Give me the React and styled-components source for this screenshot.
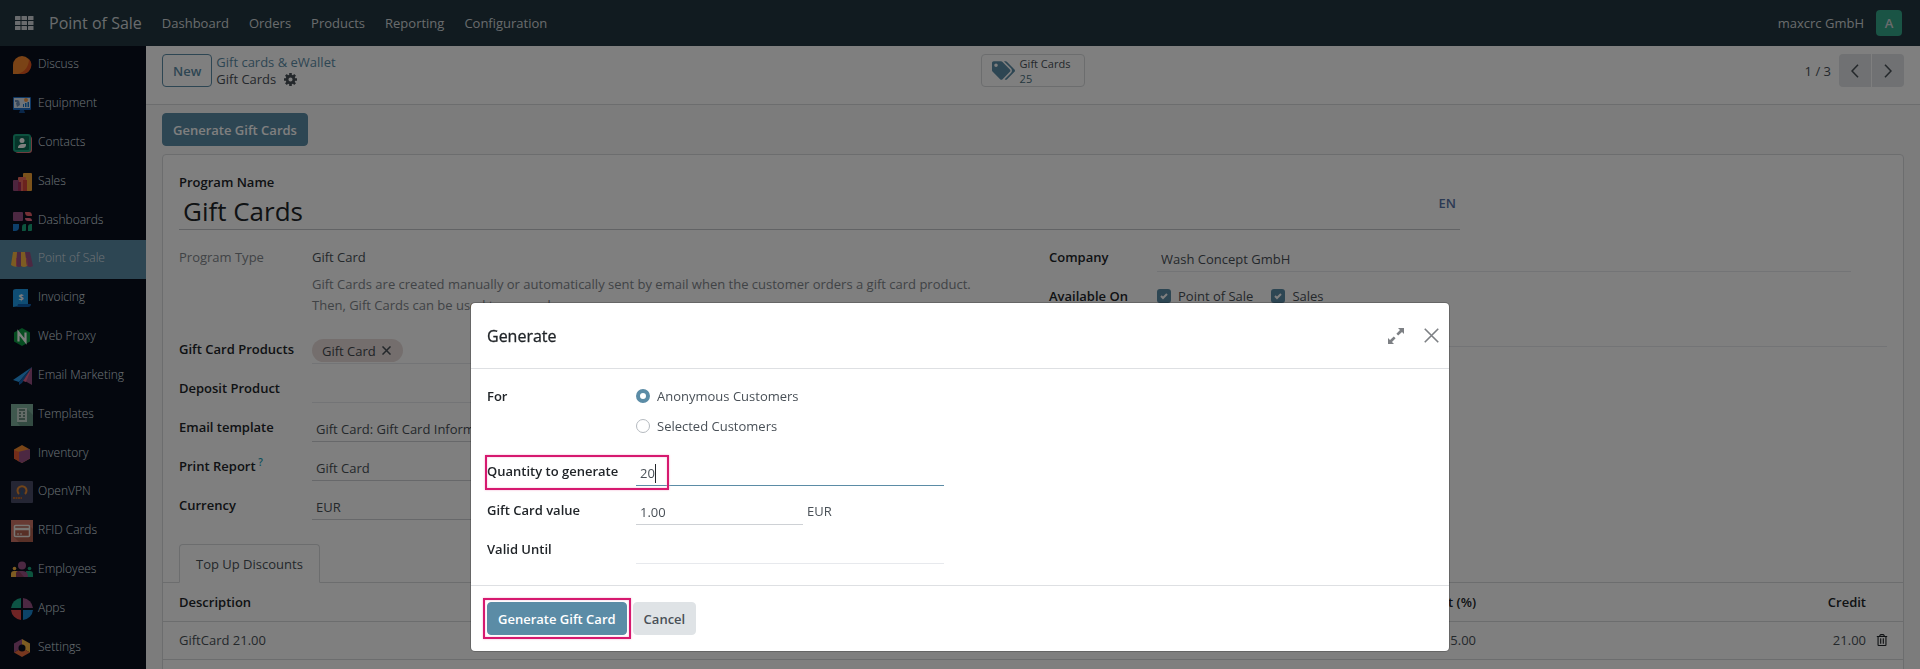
import React, { useState } from "react";
import styled, { createGlobalStyle, css } from "styled-components";
import { FaTags, FaRegTrashAlt } from "react-icons/fa";

const color = {
  primary: "#5b8ca6",
  text: "#495057",
  heading: "#212529",
  muted: "#81868c",
  line: "#d8dadd",
  soft: "#e7e9ed",
  marker: "#d6196f",
};

const GlobalStyle = createGlobalStyle`
  *, *::before, *::after { box-sizing: border-box; }
  body {
    margin: 0;
    overflow: hidden;
    color: ${color.text};
    background: #f9f9f9;
    font: 400 14px/22px "Open Sans", "Noto Sans", sans-serif;
  }
  button, input { font: inherit; color: inherit; }
  a { color: inherit; text-decoration: none; }
  svg { display: block; flex: none; }
`;

const Page = styled.div`
  display: flex;
  flex-direction: column;
  height: 100vh;
  overflow: hidden;
`;

/* ---------- top bar ---------- */
const Navbar = styled.header`
  display: flex;
  align-items: center;
  flex: none;
  height: 46px;
  padding: 0 18px 0 15px;
  background: #223740;
  color: #d3d7da;
`;
const Brand = styled.a`
  margin: 0 20px 0 15px;
  font-size: 16px;
`;
const Menu = styled.nav`
  display: flex;
  gap: 20px;
  flex: 1;
  font-size: 13px;
  font-weight: 500;
`;
const User = styled.button`
  display: flex;
  align-items: center;
  gap: 12px;
  padding: 0;
  border: 0;
  background: none;
  font-size: 13px;
  font-weight: 500;
`;
const Avatar = styled.span`
  width: 26px;
  border-radius: 4px;
  background: #34a88a;
  line-height: 26px;
  font-weight: 600;
`;

/* ---------- side bar ---------- */
const Body = styled.div`
  display: flex;
  flex: 1;
  min-height: 0;
`;
const Sidebar = styled.nav`
  display: flex;
  flex-direction: column;
  flex: none;
  width: 146px;
  padding-bottom: 2px;
  background: #080e1d;
`;
const AppLink = styled.a`
  display: flex;
  align-items: center;
  flex: 1 0 0;
  gap: 5px;
  padding-left: 11px;
  background: ${(p) => (p.$active ? color.primary : "none")};
  color: #dfe3ea;
  font-size: 12px;
  font-weight: 300;
  line-height: 16px;
  white-space: nowrap;
  span { padding-bottom: 2px; }
`;

/* ---------- main column ---------- */
const Main = styled.main`
  flex: 1;
  min-width: 0;
  overflow: hidden;
  display: flex;
  flex-direction: column;
`;
const ControlPanel = styled.div`
  display: grid;
  grid-template-columns: 1fr auto 1fr;
  align-items: start;
  flex: none;
  height: 59px;
  padding: 8px 16px;
  border-bottom: 1px solid ${color.line};
  background: #fff;
`;
const PanelStart = styled.div`
  display: flex;
  gap: 4px;
`;
const PanelEnd = styled.div`
  display: flex;
  align-items: center;
  justify-content: flex-end;
  gap: 8px;
  font-size: 13px;
`;
const Crumbs = styled.div`
  font-size: 13px;
  line-height: 17px;
  a { color: ${color.primary}; font-weight: 500; }
`;
const Current = styled.div`
  display: flex;
  align-items: center;
  gap: 8px;
`;
const IconButton = styled.button`
  display: flex;
  align-items: center;
  justify-content: center;
  padding: 0;
  border: 0;
  background: none;
  color: ${(p) => p.$tone || color.text};
`;
const Button = styled.button`
  height: 33px;
  padding: 0 10px;
  border: 1px solid ${color.primary};
  border-radius: 4px;
  font-size: 13px;
  font-weight: 600;
  line-height: 22px;
  white-space: nowrap;
  ${(p) =>
    ({
      primary: css`background: ${color.primary}; color: #fff;`,
      outline: css`background: #fff; color: ${color.primary};`,
      secondary: css`background: #dfe3e6; border-color: #dfe3e6; color: ${color.text};`,
    })[p.$kind]}
`;
const StatButton = styled.button`
  display: flex;
  align-items: center;
  gap: 5px;
  height: 33px;
  padding: 0 14px 0 10px;
  border: 1px solid ${color.line};
  border-radius: 4px;
  background: #fff;
  font-size: 11px;
  line-height: 15px;
  text-align: left;
  svg { color: ${color.primary}; }
  b { display: block; color: #48707f; font-weight: 500; }
`;
const Pager = styled.div`
  display: flex;
  gap: 1px;
`;
const PagerButton = styled(IconButton)`
  width: 32px;
  height: 33px;
  background: #e0e3e6;
  border-radius: ${(p) => (p.$next ? "0 4px 4px 0" : "4px 0 0 4px")};
`;

/* ---------- form sheet ---------- */
const Content = styled.div`
  display: flex;
  flex-direction: column;
  align-items: stretch;
  flex: 1;
  gap: 8px;
  padding: 8px 16px 0;
`;
const Sheet = styled.section`
  flex: 1 0 auto;
  padding: 16px 0 32px;
  border: 1px solid ${color.line};
  border-radius: 4px 4px 0 0;
  background: #fff;
`;
const SheetInner = styled.div`
  padding: 0 16px;
`;
const Label = styled.label`
  color: ${(p) => (p.$muted ? color.muted : color.heading)};
  font-size: 13px;
  font-weight: ${(p) => (p.$muted ? 500 : 600)};
  sup { color: #17a2b8; font-size: 10px; line-height: 10px; }
`;
const TitleBlock = styled.div`
  display: flex;
  flex-direction: column;
  width: 75%;
  margin-bottom: 16px;
`;
const TitleField = styled.div`
  display: flex;
  align-items: flex-start;
  height: 37px;
  padding: 0 4px;
  border-bottom: 1px solid #c4c7cb;
`;
const TitleInput = styled.input`
  flex: 1;
  min-width: 0;
  height: 36px;
  padding: 0;
  border: 0;
  outline: 0;
  background: none;
  color: ${color.heading};
  font-size: 26px;
`;
const LangButton = styled.button`
  padding: 0;
  border: 0;
  background: none;
  color: #5875a8;
  font-size: 13px;
  font-weight: 600;
  line-height: 20px;
`;
const Groups = styled.div`
  display: grid;
  grid-template-columns: 1fr 1fr;
  gap: 32px;
  margin-bottom: 11px;
`;
const Row = styled.div`
  position: relative;
  display: grid;
  grid-template-columns: ${(p) => p.$label || 133}px minmax(0, 1fr);
  align-items: start;
  padding-bottom: 13px;
  padding-right: ${(p) => p.$end || 0}px;
`;
const Field = styled.div`
  display: flex;
  align-items: center;
  height: 26px;
  padding: 1px 4px 0;
  border-bottom: 1px solid ${(p) => (p.$focus ? color.primary : p.$strong ? "#ced1d5" : color.soft)};
  font-size: 13px;
`;
const FieldInput = styled.input`
  width: ${(p) => p.$width || "100%"};
  height: 22px;
  padding: 0;
  border: 0;
  outline: 0;
  background: none;
  font-size: 13px;
`;
const Caret = styled.span`
  width: 1px;
  height: 19px;
  background: ${color.heading};
`;
const TypeValue = styled.div`
  padding-bottom: 9px;
  font-size: 13px;
  p { margin: 6px 0 0; color: ${color.muted}; line-height: 21px; }
`;
const TagField = styled(Field)`
  padding: 0;
`;
const Tag = styled.span`
  display: flex;
  align-items: center;
  gap: 6px;
  height: 23px;
  padding: 0 12px 0 10px;
  border-radius: 12px;
  background: #e9dddb;
  color: #43484e;
  font-weight: 500;
`;
const Checks = styled.div`
  display: flex;
  gap: 18px;
  height: 23px;
`;
const Choice = styled.label`
  display: flex;
  align-items: center;
  gap: 7px;
  height: 22px;
  font-size: 13px;
`;
const Check = styled.input`
  appearance: none;
  width: 14px;
  height: 14px;
  margin: 0;
  border-radius: 3px;
  background: ${color.primary}
    url("data:image/svg+xml,%3Csvg xmlns='http://www.w3.org/2000/svg' viewBox='0 0 14 14'%3E%3Cpath fill='none' stroke='white' stroke-width='2' d='M4 7l2 2 4-4'/%3E%3C/svg%3E");
`;
const TabBar = styled.div`
  display: flex;
  height: 39px;
  padding: 0 16px;
  border-bottom: 1px solid ${color.line};
`;
const Tab = styled.button`
  height: 39px;
  padding: 0 16px;
  border: 1px solid ${color.line};
  border-bottom-color: #fff;
  border-radius: 4px 4px 0 0;
  background: #fff;
  font-size: 13px;
`;
const Table = styled.table`
  width: 100%;
  border-collapse: collapse;
  table-layout: fixed;
  font-size: 13px;
  tr { height: 38px; border-bottom: 1px solid ${color.line}; }
  th { color: ${color.heading}; font-weight: 600; }
  th, td { padding: 0; text-align: right; }
  th:first-child, td:first-child { padding-left: 16px; text-align: left; }
  td:last-child { padding-left: 10px; }
`;
const Col = styled.col`
  width: ${(p) => p.$width};
`;

/* ---------- dialog ---------- */
const Backdrop = styled.div`
  position: fixed;
  inset: 0;
  display: flex;
  align-items: flex-start;
  justify-content: center;
  padding-top: 303px;
  background: rgba(0, 0, 0, 0.5);
`;
const Dialog = styled.section`
  width: 978px;
  max-width: calc(100% - 32px);
  border-radius: 4px;
  background: #fff;
  box-shadow: 0 0 0 1px rgba(0, 0, 0, 0.2);
`;
const DialogHeader = styled.header`
  display: flex;
  align-items: center;
  gap: 20px;
  height: 66px;
  padding: 0 10px 0 16px;
  border-bottom: 1px solid #dee0e3;
  h2 { flex: 1; margin: 0; color: ${color.heading}; font-size: 16px; font-weight: 500; -webkit-text-stroke: 0.3px; }
`;
const DialogBody = styled.div`
  padding: 16px 16px 8px;
  > div { max-width: 457px; }
`;
const Radios = styled.div`
  display: flex;
  flex-direction: column;
  gap: 8px;
  padding-bottom: 10px;
`;
const Radio = styled.input`
  appearance: none;
  width: 14px;
  height: 14px;
  margin: 0;
  border: 1px solid #b5babf;
  border-radius: 50%;
  background: #fff;
  &:checked { border: 4px solid ${color.primary}; }
`;
const ValueLine = styled.div`
  display: grid;
  grid-template-columns: 167px auto;
  gap: 4px;
  font-size: 13px;
  > span { padding-top: 1px; }
`;
const DialogFooter = styled.footer`
  display: flex;
  gap: 6px;
  padding: 16px;
  border-top: 1px solid #dee0e3;
`;
const Marker = styled.span`
  position: absolute;
  inset: ${(p) => p.$inset};
  width: ${(p) => p.$width || "auto"};
  border: 2px solid ${color.marker};
  box-shadow: 0 0 2px #f3b0d0, inset 0 0 2px #f3b0d0;
  pointer-events: none;
`;
const Marked = styled.div`
  position: relative;
`;

/* ---------- drawings ---------- */
const GridIcon = () => (
  <svg width="19" height="14" viewBox="0 0 19 14" fill="currentColor">
    {[0, 5, 10].map((y) =>
      [0, 6.5, 13].map((x) => <rect key={`${x}-${y}`} x={x} y={y} width="5.500" height="4" rx="0.5" />)
    )}
  </svg>
);
const GearIcon = () => (
  <svg width="13" height="13" viewBox="0 0 12 12" fill="none" stroke="currentColor">
    <circle cx="6" cy="6" r="3.2" strokeWidth="2.6" />
    {[0, 45, 90, 135].map((a) => (
      <path key={a} d="M6 0v2.2M6 9.8V12" strokeWidth="2.4" transform={`rotate(${a} 6 6)`} />
    ))}
  </svg>
);
const Chevron = ({ right }) => (
  <svg width="8" height="14" viewBox="0 0 8 14" fill="none" stroke="currentColor" strokeWidth="1.6">
    <path d={right ? "M1 .8L7 7l-6 6.2" : "M7 .8L1 7l6 6.2"} />
  </svg>
);
const CrossIcon = ({ size = 14, width = 1.5 }) => (
  <svg width={size} height={size} viewBox="0 0 14 14" fill="none" stroke="currentColor" strokeWidth={width}>
    <path d="M.7.7l12.6 12.6M13.3.7L.7 13.3" />
  </svg>
);
const ExpandIcon = () => (
  <svg width="16" height="16" viewBox="0 0 16 16" fill="currentColor">
    <path d="M10 0h6v6l-2-2-3.800 3.600-1.800-1.800L12 2zM6 16H0v-6l2 2 3.800-3.600 1.800 1.800L4 14z" />
  </svg>
);

const appIcons = {
  Discuss: (
    <>
      <path d="M2 20v-9a9 9 0 1 1 9 9z" fill="#f5862c" />
      <path d="M18 5a9 9 0 0 1-7 15H7C14 18 18 12 18 5z" fill="#e2561f" />
    </>
  ),
  Equipment: (
    <>
      <rect x="2" y="4" width="18" height="13" rx="1" fill="#1c6fc9" />
      <rect x="3" y="5" width="16" height="10" fill="#dbe7f2" />
      <path d="M4 7h3v2H4zM5 10l3-3 1 5-3 2z" fill="#6f8fb5" />
      <circle cx="15" cy="7" r="2" fill="#f29a4a" />
      <path d="M12 14v-3h1v3zM14 14v-4h1.500v4zM16.500 14V9H18v5z" fill="#1673c4" />
      <path d="M9 17h4l1 3H8z" fill="#154f94" />
    </>
  ),
  Contacts: (
    <>
      <rect x="4" y="4" width="17" height="17" rx="3" fill="#e0787c" />
      <rect x="2" y="2" width="18" height="18" rx="3" fill="#1aa37f" />
      <rect x="4" y="4" width="14" height="14" rx="1" fill="#0b6b55" />
      <circle cx="11" cy="8.500" r="2.500" fill="#fff" />
      <path d="M7 16c0-3 2-4 5-4h3c0 3-1 4-4 4z" fill="#fff" />
    </>
  ),
  Sales: (
    <>
      <rect x="12" y="2" width="9" height="18" rx="1" fill="#f6a536" />
      <rect x="7" y="6" width="8" height="14" rx="1" fill="#ef6a5e" />
      <rect x="12" y="9" width="4" height="11" fill="#d7453b" />
      <rect x="2" y="9" width="6" height="11" rx="1" fill="#9b4a7c" />
      <rect x="7" y="11" width="3" height="9" fill="#a52a5c" />
    </>
  ),
  Dashboards: (
    <>
      <rect x="2" y="2" width="10" height="9" rx="1" fill="#985184" />
      <path d="M14 2h4q3 0 3 4h-4q-3 0-3-4z" fill="#e8616a" />
      <path d="M14 8h4q3 0 3 3h-4q-3 0-3-3z" fill="#f0708a" />
      <path d="M2 14h6v3q0 4-4 4H2z" fill="#1a7fd6" />
      <path d="M14 14h1v6q0 1-1 1h-3v-4q0-3 3-3zM20 14h1v6q0 1-1 1h-3v-4q0-3 3-3z" fill="#1aa87c" />
    </>
  ),
  "Point of Sale": (
    <>
      <path d="M2 4h5v14q-3 2-7-1z" fill="#fbb945" />
      <path d="M6 4h5v14q-3 2-6 0z" fill="#985184" />
      <path d="M10 4h5l1 14q-3 2-6 0z" fill="#fbb945" />
      <path d="M14 4h5l3 14q-3 2-6 0z" fill="#985184" />
      <path d="M5 10v8h1V10zM15 10l1 8h1l-1-8z" fill="#d9566f" />
    </>
  ),
  Invoicing: (
    <>
      <path d="M2 20V4q0-2 3-2h12v16z" fill="#1e9be9" />
      <path d="M5 20q2-1 2-3h13q0 3-3 3z" fill="#0d5fae" />
      <text x="10" y="14" fontSize="9" fontWeight="700" fill="#fff" textAnchor="middle">$</text>
    </>
  ),
  "Web Proxy": (
    <>
      <path d="M11 2l8 4.500v9L11 20l-8-4.500v-9z" fill="#0c9a42" />
      <path d="M7.500 15.500v-9l7 9v-9" fill="none" stroke="#fff" strokeWidth="2.200" />
    </>
  ),
  "Email Marketing": (
    <>
      <path d="M21 2v18l-7-4z" fill="#985184" />
      <path d="M21 2L2 15l6 2z" fill="#2b9bea" />
      <path d="M21 2L8 17v3l3-2z" fill="#1463b0" />
      <path d="M21 2l-9 14 3 1z" fill="#e0608c" />
    </>
  ),
  Templates: (
    <>
      <rect width="22" height="22" fill="#7fb09d" />
      <path d="M16 5l6 6v11H9l-3-4z" fill="#679785" />
      <rect x="6" y="4" width="10" height="14" fill="#c9d8d1" />
      <path d="M8 6h6M8 9h2M12 9h2M8 12h2M12 12h2M8 15h6" stroke="#4c7465" strokeWidth="1.500" />
    </>
  ),
  Inventory: (
    <>
      <path d="M11 2l8 4.500v9L11 20l-8-4.500v-9z" fill="#f28a2e" />
      <path d="M11 8l8-2v9.500L11 20l-4-2V9z" fill="#985184" />
      <path d="M3 7l5 2v9.500l-5-3z" fill="#e75a34" />
    </>
  ),
  OpenVPN: (
    <>
      <rect width="22" height="22" rx="1" fill="#4a4d68" />
      <path d="M8 13a4.500 4.500 0 1 1 6 0" fill="none" stroke="#e58a33" strokeWidth="2" />
      <path d="M10.500 9h1l1 5h-3z" fill="#30577f" />
      <path d="M2 17h9" stroke="#b4662f" strokeWidth="2" strokeDasharray="2 .5" />
    </>
  ),
  "RFID Cards": (
    <>
      <rect width="22" height="22" fill="#cf7566" />
      <path d="M19 6l3 3v13H8l-5-5z" fill="#b0604f" />
      <rect x="3.500" y="5.500" width="15" height="11" rx="1" fill="#b0604f" stroke="#f0ece6" strokeWidth="1.500" />
      <path d="M4 9h14" stroke="#f0ece6" strokeWidth="2.500" />
      <path d="M6 14h2M9 14h2" stroke="#f0ece6" />
    </>
  ),
  Employees: (
    <>
      <circle cx="11" cy="6.500" r="4" fill="#985184" />
      <circle cx="3.500" cy="9.500" r="1.800" fill="#fbb945" />
      <circle cx="18.500" cy="9.500" r="1.800" fill="#1aa87c" />
      <path d="M0 18v-3q0-3 3-3h4v6z" fill="#fbb945" />
      <path d="M22 18v-3q0-3-3-3h-4v6z" fill="#1aa87c" />
      <path d="M5 18v-3q0-3 3-3h4q5 0 5 6z" fill="#985184" />
      <path d="M5 18v-3q0-3 3-3l5 6z" fill="#8a3d5c" />
    </>
  ),
  Apps: (
    <>
      <path d="M10 0v10H0A11 11 0 0 1 10 0z" fill="#1aa88a" />
      <path d="M12 0v10h10A11 11 0 0 0 12 0z" fill="#985184" />
      <path d="M10 22V12H0a11 11 0 0 0 10 10z" fill="#e0484a" />
      <path d="M12 22V12h10a11 11 0 0 1-10 10z" fill="#1a86d0" />
    </>
  ),
  Settings: (
    <>
      <path d="M11 2l8 4.500v9L11 11z" fill="#fbb945" />
      <path d="M11 2v9l-8 4.500v-9z" fill="#985184" />
      <path d="M3 15.500L11 11l8 4.500L11 20z" fill="#ef6f3e" />
      <circle cx="11" cy="11" r="3.500" fill="#080e1d" />
    </>
  ),
};

const records = [
  ["email", "Email template", "Gift Card: Gift Card Information"],
  ["report", "Print Report", "Gift Card", true],
  ["currency", "Currency", "EUR"],
];

export default function App() {
  const [target, setTarget] = useState("anonymous");
  return (
    <Page>
      <GlobalStyle />
      <Navbar>
        <IconButton $tone="#d3d7da" aria-label="Apps"><GridIcon /></IconButton>
        <Brand href="#pos">Point of Sale</Brand>
        <Menu>
          {["Dashboard", "Orders", "Products", "Reporting", "Configuration"].map((m) => (
            <a key={m} href={`#${m}`}>{m}</a>
          ))}
        </Menu>
        <User>maxcrc GmbH<Avatar>A</Avatar></User>
      </Navbar>
      <Body>
        <Sidebar>
          {Object.entries(appIcons).map(([name, icon]) => (
            <AppLink key={name} href={`#${name}`} $active={name === "Point of Sale"}>
              <svg width="22" height="22" viewBox="0 0 22 22">{icon}</svg>
              <span>{name}</span>
            </AppLink>
          ))}
        </Sidebar>
        <Main>
          <ControlPanel>
            <PanelStart>
              <Button $kind="outline">New</Button>
              <Crumbs>
                <a href="#programs">Gift cards &amp; eWallet</a>
                <Current>Gift Cards<IconButton aria-label="Actions"><GearIcon /></IconButton></Current>
              </Crumbs>
            </PanelStart>
            <StatButton>
              <FaTags size={23} />
              <span>Gift Cards<b>25</b></span>
            </StatButton>
            <PanelEnd>
              <span>1 / 3</span>
              <Pager>
                <PagerButton aria-label="Previous"><Chevron /></PagerButton>
                <PagerButton $next aria-label="Next"><Chevron right /></PagerButton>
              </Pager>
            </PanelEnd>
          </ControlPanel>
          <Content>
            <div><Button $kind="primary">Generate Gift Cards</Button></div>
            <Sheet>
              <SheetInner>
                <TitleBlock>
                  <Label htmlFor="name">Program Name</Label>
                  <TitleField>
                    <TitleInput id="name" defaultValue="Gift Cards" />
                    <LangButton>EN</LangButton>
                  </TitleField>
                </TitleBlock>
                <Groups>
                  <div>
                    <Row>
                      <Label as="span" $muted>Program Type</Label>
                      <TypeValue>
                        Gift Card
                        <p>
                          Gift Cards are created manually or automatically sent by email when the customer orders a
                          gift card product.
                          <br />
                          Then, Gift Cards can be used to pay orders.
                        </p>
                      </TypeValue>
                    </Row>
                    <Row>
                      <Label as="span">Gift Card Products</Label>
                      <TagField>
                        <Tag>
                          Gift Card
                          <IconButton aria-label="Remove"><CrossIcon size={9} width={2.4} /></IconButton>
                        </Tag>
                      </TagField>
                    </Row>
                    <Row>
                      <Label htmlFor="deposit">Deposit Product</Label>
                      <Field><FieldInput id="deposit" /></Field>
                    </Row>
                    {records.map(([id, label, value, help]) => (
                      <Row key={id}>
                        <Label htmlFor={id}>{label}{help && <sup> ?</sup>}</Label>
                        <Field $strong><FieldInput id={id} defaultValue={value} /></Field>
                      </Row>
                    ))}
                  </div>
                  <div>
                    <Row $label={108} $end={36}>
                      <Label htmlFor="company">Company</Label>
                      <Field><FieldInput id="company" defaultValue="Wash Concept GmbH" /></Field>
                    </Row>
                    <Row $label={108}>
                      <Label as="span">Available On</Label>
                      <Checks>
                        <Choice><Check type="checkbox" defaultChecked />Point of Sale</Choice>
                        <Choice><Check type="checkbox" defaultChecked />Sales</Choice>
                      </Checks>
                    </Row>
                    <Row $label={108}>
                      <span />
                      <Field><FieldInput aria-label="Point of Sale list" /></Field>
                    </Row>
                  </div>
                </Groups>
              </SheetInner>
              <TabBar><Tab>Top Up Discounts</Tab></TabBar>
              <Table>
                <colgroup>
                  <Col />
                  <Col $width="390px" />
                  <Col $width="390px" />
                  <Col $width="37px" />
                </colgroup>
                <thead>
                  <tr><th>Description</th><th>Discount (%)</th><th>Credit</th><th /></tr>
                </thead>
                <tbody>
                  <tr>
                    <td>GiftCard 21.00</td>
                    <td>15.00</td>
                    <td>21.00</td>
                    <td><IconButton $tone={color.heading} aria-label="Delete"><FaRegTrashAlt size={12} /></IconButton></td>
                  </tr>
                </tbody>
              </Table>
            </Sheet>
          </Content>
        </Main>
      </Body>
      <Backdrop>
        <Dialog role="dialog" aria-labelledby="dialog-title">
          <DialogHeader>
            <h2 id="dialog-title">Generate</h2>
            <IconButton $tone="#7d8084" aria-label="Expand"><ExpandIcon /></IconButton>
            <IconButton $tone="#7d8084" aria-label="Close"><CrossIcon size={15} /></IconButton>
          </DialogHeader>
          <DialogBody>
            <Row $label={149}>
              <Label as="span">For</Label>
              <Radios>
                {[["anonymous", "Anonymous Customers"], ["selected", "Selected Customers"]].map(([id, text]) => (
                  <Choice key={id}>
                    <Radio type="radio" name="target" checked={target === id} onChange={() => setTarget(id)} />
                    {text}
                  </Choice>
                ))}
              </Radios>
            </Row>
            <Row $label={149}>
              <Label htmlFor="quantity">Quantity to generate</Label>
              <Field $focus>
                <FieldInput id="quantity" defaultValue="20" $width="15px" />
                <Caret />
              </Field>
              <Marker $inset="-5px auto 9px -2px" $width="184px" />
            </Row>
            <Row $label={149}>
              <Label htmlFor="value">Gift Card value</Label>
              <ValueLine>
                <Field $strong><FieldInput id="value" defaultValue="1.00" /></Field>
                <span>EUR</span>
              </ValueLine>
            </Row>
            <Row $label={149}>
              <Label htmlFor="until">Valid Until</Label>
              <Field><FieldInput id="until" /></Field>
            </Row>
          </DialogBody>
          <DialogFooter>
            <Marked>
              <Button $kind="primary">Generate Gift Card</Button>
              <Marker $inset="-4px" />
            </Marked>
            <Button $kind="secondary">Cancel</Button>
          </DialogFooter>
        </Dialog>
      </Backdrop>
    </Page>
  );
}
